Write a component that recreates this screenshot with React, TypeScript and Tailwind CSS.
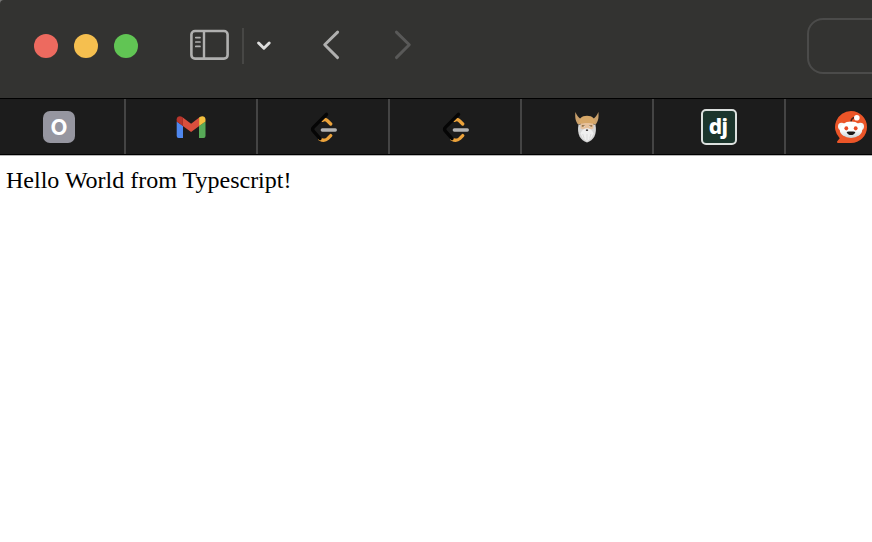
import React from "react";

function SidebarIcon() {
  return (
    <svg className="block h-9 w-10 shrink-0" viewBox="0 0 40 36" fill="none" stroke="#b0b0af" strokeLinecap="round">
      <rect x="1.4" y="3" width="36.2" height="27.6" rx="3.6" strokeWidth="2.6" />
      <path d="M14 3v28" strokeWidth="2.4" strokeLinecap="butt" />
      <path d="M5.8 9.6h4.2M5.8 14h4.2M5.8 18.4h4.2" strokeWidth="1.7" />
    </svg>
  );
}

function GmailIcon() {
  return (
    <svg className="block h-8 w-8" viewBox="0 0 32 32">
      <path fill="#4f87ee" d="M1.7 10.5 8 15v12H3.8a2 2 0 0 1-2.1-2z" />
      <path fill="#57a957" d="M30.5 10.5 24 15v12h4.4a2 2 0 0 0 2.1-2z" />
      <path fill="#d94f3d" d="m7.8 6.4 8.3 6.3 8.1-6.3v8.5l-8.1 6.2-8.3-6.2z" />
      <path fill="#b8352c" d="M1.7 8.3c0-3.2 3.4-4 5.6-2.3l.6.5v8.4l-6.2-4.5z" />
      <path fill="#f3bf3e" d="M30.5 8.3c0-3.2-3.5-4-5.7-2.3l-.7.5v8.4l6.4-4.5z" />
    </svg>
  );
}

function LeetCodeIcon() {
  return (
    <svg className="block h-8 w-8" viewBox="0 0 32 32" fill="none" strokeLinecap="round">
      <path d="M15.5 9.3c2-1.3 3.6-.9 5.2.7l3 3M13 28.3c2.9 1.5 5.6 1.2 7.7-.7l3-3" stroke="#eca33b" strokeWidth="3.3" strokeLinejoin="round" />
      <path d="M19.6 3.3 6.6 16.1c-1.2 1.2-1.2 3 0 4.3l6.5 7.2" stroke="#050505" strokeWidth="3.3" strokeLinejoin="round" />
      <path d="M15.3 19h13" stroke="#b3b3b3" strokeWidth="3.3" />
    </svg>
  );
}

function VikingIcon() {
  return (
    <svg className="block h-8 w-8" viewBox="0 0 32 32">
      <path fill="#c9a06c" d="M4.4 1C3.9 6 4.3 10.4 7.4 13.8l3.2-5.4C7.2 6.6 5.8 4 4.4 1Z" />
      <path fill="#c9a06c" d="M27.4 1c.5 5 .1 9.4-3 12.8l-3.2-5.4C24.6 6.6 26 4 27.4 1Z" />
      <path fill="#d6d6d6" d="M7.5 13.5C6.6 18 7 22 8.6 25.4c1.6 3.2 4.2 4.8 7.4 6 3.2-1.2 5.8-2.8 7.4-6 1.6-3.4 2-7.4 1-11.9z" />
      <path fill="#e5c09b" d="M9.4 12h13.2l-.2 5.6-4.7 1.2h-3.4l-4.8-1.2z" />
      <path fill="#d6a768" d="M7.7 13.6C7.4 8.1 10.5 4.8 16 4.8s8.6 3.3 8.3 8.8c-4-2-12.4-2-16.6 0Z" />
      <path fill="#efefef" d="M9.4 22.5c1.6-3.6 4-5.2 6.6-5.2s5 1.6 6.6 5.2L20 27.6 16 30l-4-2.4z" />
      <path d="M10.8 14.9h3.2M18 14.9h3.2" stroke="#96744a" strokeWidth="1.6" />
      <circle cx="13.3" cy="15.2" r=".6" fill="#fff" />
      <circle cx="18.8" cy="15.2" r=".6" fill="#fff" />
      <ellipse cx="16" cy="19.2" rx="1.2" ry=".9" fill="#484141" />
      <path d="m11.7 23 1.5 4.5m6.8-4.5-1.3 4.5M16 23v6" stroke="#c5c5c5" strokeWidth=".5" />
    </svg>
  );
}

function RedditIcon() {
  return (
    <svg className="block h-8 w-8" viewBox="0 0 32 32">
      <defs>
        <linearGradient id="face" x1="0" y1="0" x2="0" y2="1">
          <stop offset=".5" stopColor="#fff" />
          <stop offset="1" stopColor="#c8d3d8" />
        </linearGradient>
      </defs>
      <path fill="#eb5528" d="M16 0a16 16 0 1 1 0 32H3c-1.2 0-1.5-1-.7-1.8l2.4-2.9A16 16 0 0 1 16 0Z" />
      <path d="M16 11.5c0-3 1.8-5 4.5-5" fill="none" stroke="#4d2219" strokeWidth="1.6" />
      <circle cx="21.8" cy="6.8" r="2.8" fill="#fff" />
      <circle cx="6.6" cy="15.4" r="3.6" fill="#f5f5f5" />
      <circle cx="25.4" cy="15.4" r="3.6" fill="#f5f5f5" />
      <ellipse cx="16" cy="18.7" rx="11.2" ry="8.2" fill="url(#face)" />
      <ellipse cx="11.3" cy="17.3" rx="1.9" ry="2.1" fill="#e84b27" />
      <ellipse cx="20.7" cy="17.3" rx="1.9" ry="2.1" fill="#e84b27" />
      <path d="M11.6 20.9c2.6-.5 6.2-.5 8.8 0-.9 4.1-7.9 4.1-8.8 0Z" fill="#1a1717" />
    </svg>
  );
}

function Tab({ children }: { children: React.ReactNode }) {
  return (
    <div className="flex h-[55px] w-[132px] shrink-0 items-center justify-center border-r-2 border-[#444444]">
      {children}
    </div>
  );
}

export default function App() {
  return (
    <div className="h-[542px] w-[872px] overflow-hidden bg-white">
      <div className="bg-[#777776]">
        <header className="flex h-[98px] items-start overflow-hidden rounded-tl-[4px] bg-[#333331]">
          <div className="ml-[34px] mt-[34px] flex shrink-0 gap-4">
            <span className="size-6 rounded-full bg-[#ed6a5f]" />
            <span className="size-6 rounded-full bg-[#f5bf4f]" />
            <span className="size-6 rounded-full bg-[#61c554]" />
          </div>
          <div className="ml-[52px] mt-7 flex shrink-0 items-center">
            <SidebarIcon />
            <span className="ml-3 h-9 w-0.5 bg-[#474745]" />
            <svg className="ml-3 block h-9 w-4" viewBox="0 0 16 36" fill="none">
              <path d="m2.6 15 5.3 5.2 5.3-5.2" stroke="#dededd" strokeWidth="3" strokeLinecap="round" strokeLinejoin="round" />
            </svg>
          </div>
          <svg className="ml-[50px] mt-7 block h-9 w-5 shrink-0" viewBox="0 0 20 36" fill="none">
            <path d="M15.6 4.1 2.7 16.8l12.9 12.8" stroke="#b0b0af" strokeWidth="2.9" strokeLinecap="round" strokeLinejoin="round" />
          </svg>
          <svg className="ml-[50px] mt-7 block h-9 w-5 shrink-0" viewBox="0 0 20 36" fill="none">
            <path d="m4.4 4.1 12.9 12.7L4.4 29.6" stroke="#595958" strokeWidth="2.9" strokeLinecap="round" strokeLinejoin="round" />
          </svg>
          <div className="ml-[395px] mt-[18px] h-14 w-[140px] shrink-0 rounded-2xl border-2 border-[#4b4b4a]" />
        </header>
      </div>
      <nav className="-ml-px h-[57px] overflow-hidden border-y border-black bg-[#1c1c1c]">
        <div className="-ml-[5px] flex w-[924px]">
          <Tab>
            <span className="flex size-8 items-center justify-center rounded-[7px] bg-[#9696a0] pt-px font-[Inter] text-[22px] font-bold leading-8 text-white">O</span>
          </Tab>
          <Tab><GmailIcon /></Tab>
          <Tab><LeetCodeIcon /></Tab>
          <Tab><LeetCodeIcon /></Tab>
          <Tab><VikingIcon /></Tab>
          <Tab>
            <span className="flex size-9 items-center justify-center rounded-[5px] border-2 border-[#dce0de] bg-[#1b352c] pb-0.5 pr-0.5 font-[Noto_Sans] text-[21px] font-extrabold leading-7 tracking-[-0.8px] text-white">dj</span>
          </Tab>
          <Tab><RedditIcon /></Tab>
        </div>
      </nav>
      <main className="border-t border-[#b6b6b6] px-1.5 pt-[10px] font-['Liberation_Serif',serif] text-[24px] leading-7 text-black">
        Hello World from Typescript!
      </main>
    </div>
  );
}
